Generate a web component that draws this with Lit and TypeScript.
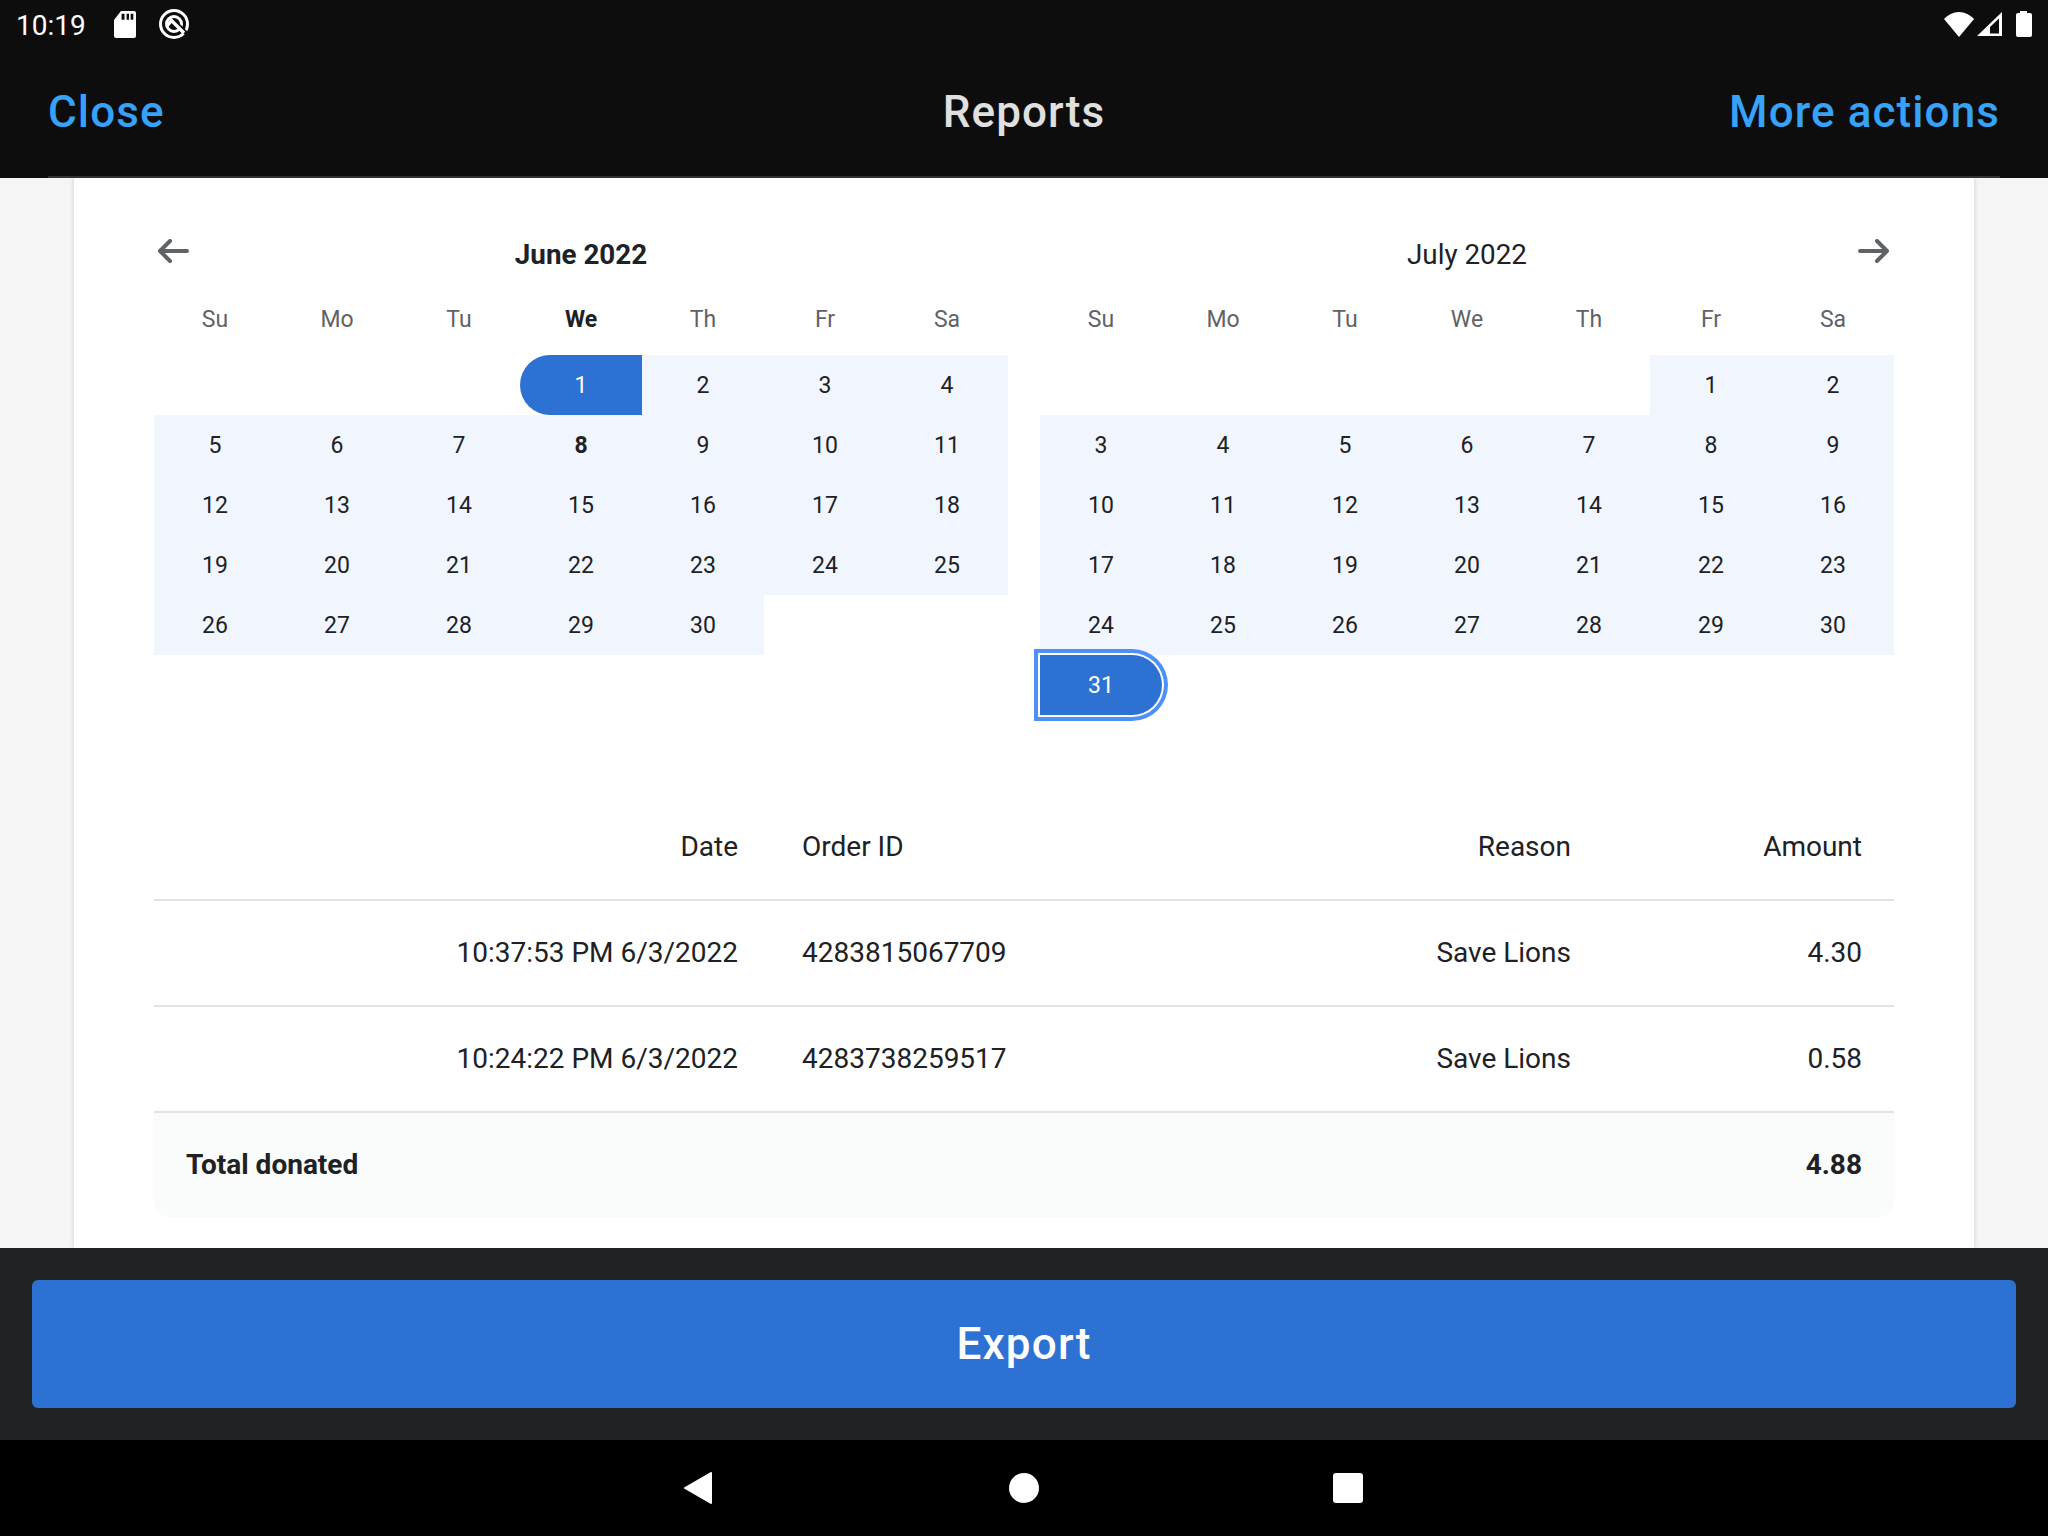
import { LitElement, html, css } from "lit";
import { customElement } from "lit/decorators.js";

type Cell = { d?: number; kind?: string; bold?: boolean };

function month(first: number, days: number, start: number, end: number, boldDay: number): Cell[] {
  const out: Cell[] = [];
  for (let i = 0; i < first; i++) out.push({});
  for (let d = 1; d <= days; d++) {
    out.push({ d, kind: d === start ? "start" : d === end ? "end" : "range", bold: d === boldDay });
  }
  return out;
}

const DOW = ["Su", "Mo", "Tu", "We", "Th", "Fr", "Sa"];
const JUNE = month(3, 30, 1, -1, 8);
const JULY = month(5, 31, -1, 31, -1);

const ROWS = [
  ["10:37:53 PM 6/3/2022", "4283815067709", "Save Lions", "4.30"],
  ["10:24:22 PM 6/3/2022", "4283738259517", "Save Lions", "0.58"],
];

@customElement("app-root")
export class AppRoot extends LitElement {
  static styles = css`
    :host {
      display: flex;
      flex-direction: column;
      width: 2048px;
      height: 1536px;
      overflow: hidden;
      background: #f5f5f5;
      font-family: Roboto, "Liberation Sans", sans-serif;
      color: #202124;
    }
    .top { background: #0d0d0e; height: 178px; flex: none; display: flex; flex-direction: column; }
    .status { height: 48px; padding: 0 16px 2px 16px; display: flex; align-items: center; color: #fff; font-size: 28px; }
    .status .time { width: 98px; margin-top: 2px; }
    .status svg { display: block; }
    .sd { margin-right: 22px; }
    .spacer { flex: 1; }
    .sig { margin: 0 14px 0 3px; }
    .bar {
      flex: 1; margin: 0 48px; padding-bottom: 2px; display: grid; grid-template-columns: 1fr auto 1fr; align-items: center;
      border-bottom: 2px solid #333436; font-size: 44px; font-weight: 500; letter-spacing: 1.1px;
    }
    .bar .link { color: #36a2f8; }
    .bar .right { text-align: right; }
    .bar .title { color: #e0e0e0; }
    .content { flex: 1; display: flex; justify-content: center; min-height: 0; }
    .card {
      width: 1900px; background: #fff; box-shadow: 0 0 5px rgba(0,0,0,0.16);
      padding: 48px 80px 0; box-sizing: border-box;
    }
    .months { display: flex; gap: 32px; }
    .month { width: 854px; }
    .mhead {
      height: 57px; display: grid; grid-template-columns: 60px 1fr 60px; align-items: center;
      font-size: 27.8px; text-align: center;
    }
    .mhead.on { font-weight: 700; }
    .arrow { display: block; margin-top: -7px; }
    .arrow.r { justify-self: end; margin-right: 4px; }
    .arrow.l { margin-left: 3px; }
    .dow, .days { display: grid; grid-template-columns: repeat(7, 122px); }
    .dow { height: 72px; align-items: center; font-size: 23px; color: #5f6368; text-align: center; }
    .dow .now { font-weight: 700; color: #202124; }
    .days { grid-auto-rows: 60px; font-size: 23px; text-align: center; }
    .c { display: flex; align-items: center; justify-content: center; }
    .range { background: #f1f6fe; }
    .start, .end { background: #2d72d2; color: #fff; }
    .start { border-radius: 30px 0 0 30px; }
    .end { border-radius: 0 30px 30px 0; box-shadow: 0 0 0 2px #fff, 0 0 0 6px #4c90f8; }
    .bold { font-weight: 700; }
    .table { margin-top: 80px; font-size: 28px; }
    .tr {
      display: grid; grid-template-columns: 616px 400px 1fr 291px; height: 104px; align-items: center;
      border-bottom: 2px solid #e1e3e5;
    }
    .tr > div { padding: 0 32px; margin-top: -2px; }
    .r { text-align: right; }
    .total {
      background: #fafbfb; border-bottom: 0; border-radius: 0 0 16px 16px; font-weight: 700;
      grid-template-columns: 1fr auto;
    }
    .foot { height: 192px; flex: none; background: #212224; padding: 32px; box-sizing: border-box; }
    .btn {
      height: 128px; border-radius: 6px; background: #2d72d2; color: #fff;
      display: flex; align-items: center; justify-content: center;
      font-size: 44px; font-weight: 500; letter-spacing: 1.2px;
    }
    .nav {
      height: 96px; flex: none; background: #000; display: grid;
      grid-template-columns: 684px 28px 297px 30px 294px 30px 1fr; align-items: center;
    }
    .nav svg { display: block; }
  `;

  private cell(c: Cell) {
    if (!c.d) return html`<div class="c"></div>`;
    return html`<div class="c ${c.kind} ${c.bold ? "bold" : ""}">${c.d}</div>`;
  }

  private arrow(dir: "l" | "r") {
    const d = dir === "l" ? "M30 12H3M13 2L3 12L13 22" : "M2 12H29M19 2L29 12L19 22";
    return html`<svg class="arrow ${dir}" width="32" height="24" viewBox="0 0 32 24" fill="none" stroke="#5f6368" stroke-width="4" stroke-linecap="round" stroke-linejoin="round"><path d=${d}></path></svg>`;
  }

  private monthView(name: string, cells: Cell[], left: boolean) {
    return html`<div class="month">
      <div class="mhead ${left ? "on" : ""}">
        ${left ? this.arrow("l") : html`<span></span>`}
        <span>${name}</span>
        ${left ? html`<span></span>` : this.arrow("r")}
      </div>
      <div class="dow">${DOW.map((d) => html`<div class=${left && d === "We" ? "now" : ""}>${d}</div>`)}</div>
      <div class="days">${cells.map((c) => this.cell(c))}</div>
    </div>`;
  }

  render() {
    return html`
      <div class="top">
        <div class="status">
          <div class="time">10:19</div>
          <svg class="sd" width="22" height="27" viewBox="0 0 22 27"><path fill="#fff" fill-rule="evenodd" d="M7 0H20a2 2 0 0 1 2 2V25a2 2 0 0 1-2 2H2a2 2 0 0 1-2-2V9ZM7.6 2.7V8.7H10.5V2.7ZM12.6 2.7V8.7H15V2.7ZM16.7 2.7V8.7H19.3V2.7Z"/></svg>
          <svg width="32" height="32" viewBox="0 0 32 32" fill="none">
            <circle cx="16" cy="16" r="13.5" stroke="#fff" stroke-width="3"/>
            <circle cx="16" cy="16" r="7.5" stroke="#fff" stroke-width="3"/>
            <path d="M18 15L32 29" stroke="#0d0d0e" stroke-width="4"/>
            <path d="M9 18L13.5 12.5L26 25" stroke="#fff" stroke-width="3.4"/>
          </svg>
          <div class="spacer"></div>
          <svg width="30" height="25" viewBox="0 0 30 25"><path fill="#fff" d="M0 7C4 3 9 0 15 0S26 3 30 7L15 25Z"/></svg>
          <svg class="sig" width="25" height="25" viewBox="0 0 25 25"><path fill="#fff" fill-rule="evenodd" d="M25 0V24H0ZM22 6.5L13 15V21.5H22Z"/></svg>
          <svg width="16" height="26" viewBox="0 0 16 26"><path fill="#fff" d="M4 0H11V2H14a2 2 0 0 1 2 2V24a2 2 0 0 1-2 2H2a2 2 0 0 1-2-2V4a2 2 0 0 1 2-2H4Z"/></svg>
        </div>
        <div class="bar">
          <span class="link">Close</span>
          <span class="title">Reports</span>
          <span class="link right">More actions</span>
        </div>
      </div>
      <div class="content">
        <div class="card">
          <div class="months">
            ${this.monthView("June 2022", JUNE, true)}
            ${this.monthView("July 2022", JULY, false)}
          </div>
          <div class="table">
            <div class="tr">
              <div class="r">Date</div><div>Order ID</div><div class="r">Reason</div><div class="r">Amount</div>
            </div>
            ${ROWS.map(
              (r) => html`<div class="tr">
                <div class="r">${r[0]}</div><div>${r[1]}</div><div class="r">${r[2]}</div><div class="r">${r[3]}</div>
              </div>`
            )}
            <div class="tr total"><div>Total donated</div><div class="r">4.88</div></div>
          </div>
        </div>
      </div>
      <div class="foot"><div class="btn">Export</div></div>
      <div class="nav">
        <span></span>
        <svg width="28" height="32" viewBox="0 0 28 32"><path fill="#fff" stroke="#fff" stroke-width="2" stroke-linejoin="round" d="M27 1V31L1 16Z"/></svg>
        <span></span>
        <svg width="30" height="30" viewBox="0 0 30 30"><circle cx="15" cy="15" r="15" fill="#fff"/></svg>
        <span></span>
        <svg width="30" height="30" viewBox="0 0 30 30"><rect width="30" height="30" rx="3" fill="#fff"/></svg>
      </div>
    `;
  }
}
